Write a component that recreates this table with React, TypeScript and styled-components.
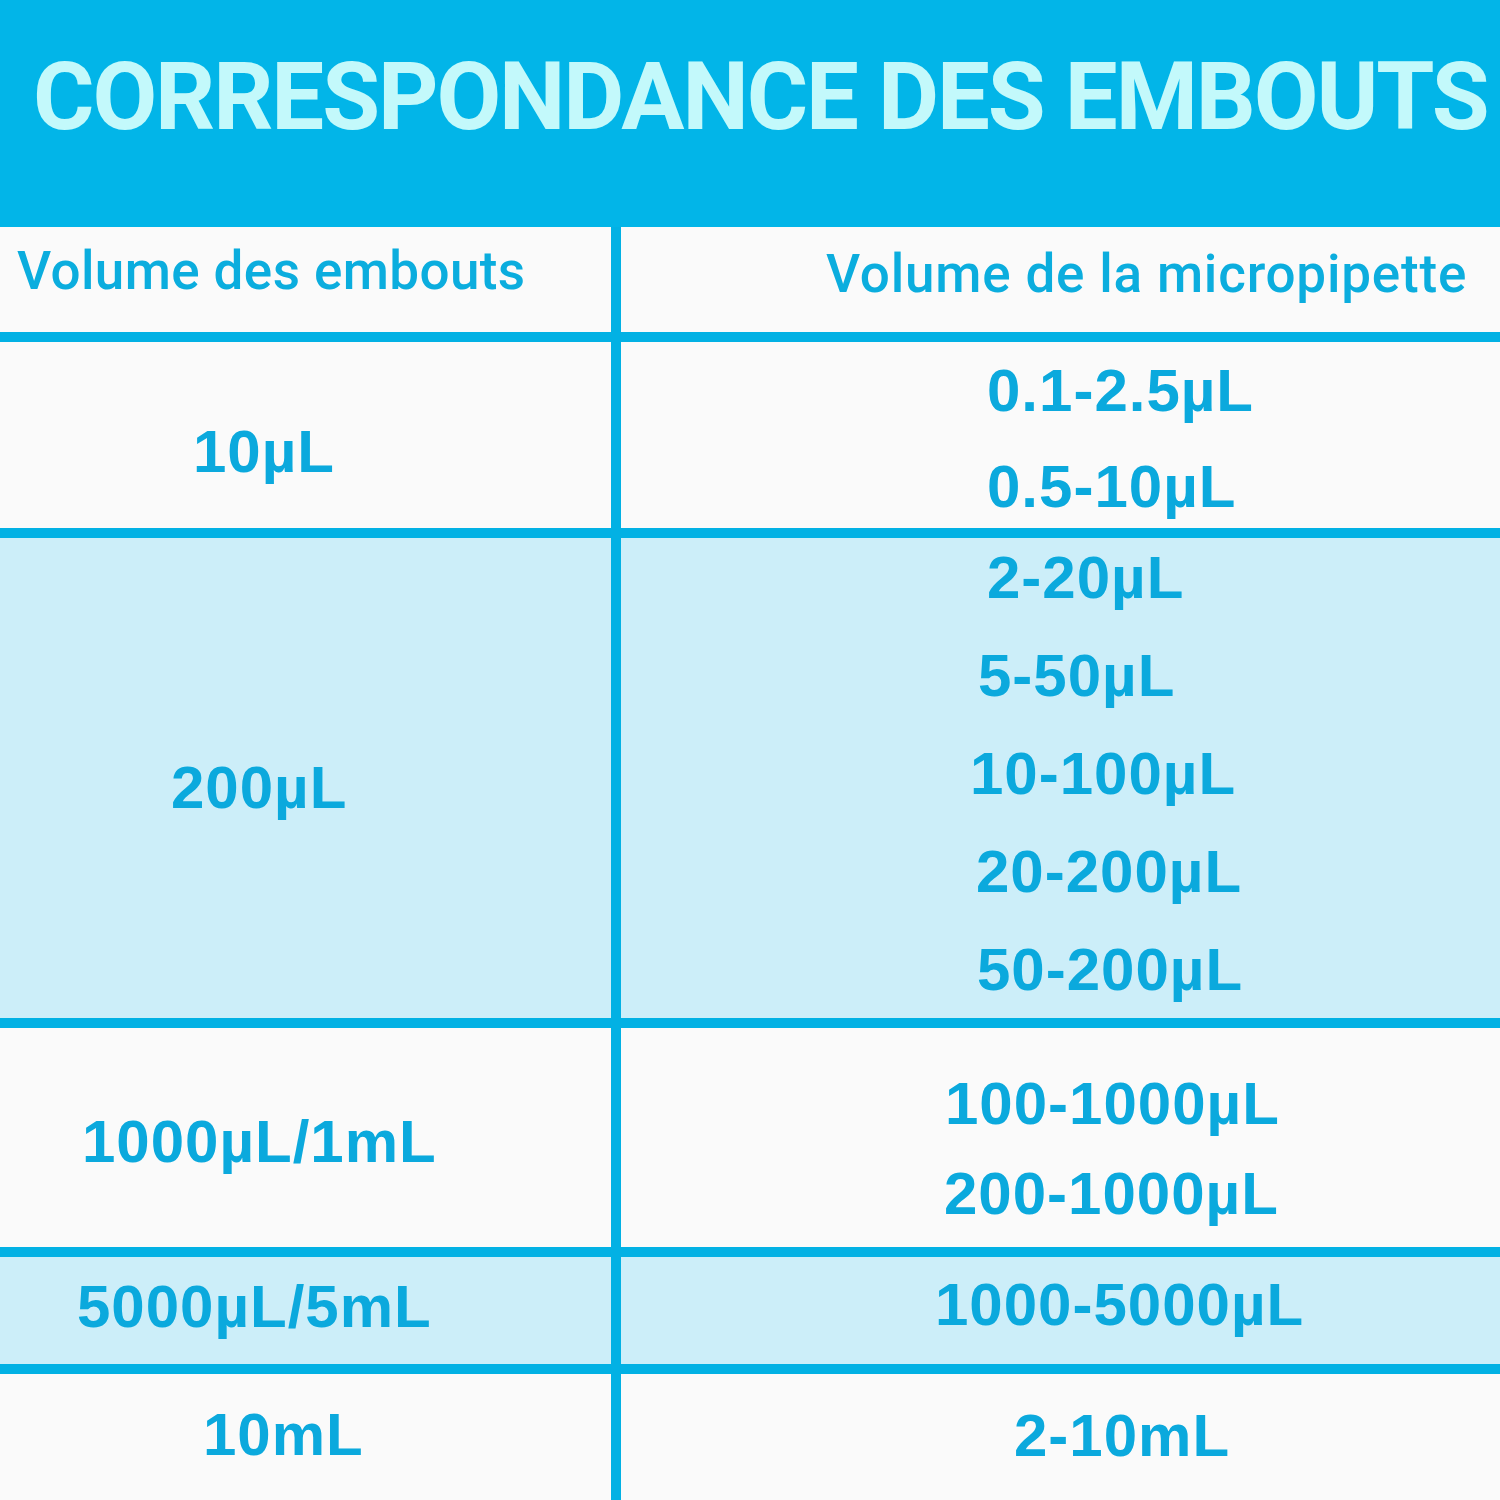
import React from "react";
import styled, { createGlobalStyle } from "styled-components";

const Global = createGlobalStyle`
  html, body { margin: 0; padding: 0; background: #fafafa; }
  body { width: 1500px; height: 1500px; overflow: hidden; }
`;

const Page = styled.div`
  width: 1500px;
  height: 1500px;
  display: flex;
  flex-direction: column;
  background: #fafafa;
  overflow: hidden;
`;

const Banner = styled.header`
  height: 227px;
  flex: none;
  box-sizing: border-box;
  background: #02b5e8;
  padding: 50px 0 0 33px;
`;

const Title = styled.h1`
  margin: 0;
  font-family: Roboto, "Noto Sans", sans-serif;
  font-weight: 700;
  font-size: 94px;
  line-height: 1;
  color: #c3f9fb;
  white-space: nowrap;
  letter-spacing: -2.1px;
`;

const Table = styled.div`
  flex: 1;
  display: grid;
  grid-template-columns: 611px 879px;
  grid-template-rows: 105px 186px 480px 219px 107px 126px;
  gap: 10px;
  background: #02b1e4;
`;

const Cell = styled.div<{ $tint?: boolean; $pad: number; $gap?: number }>`
  display: flex;
  flex-direction: column;
  gap: ${(p) => p.$gap ?? 0}px;
  box-sizing: border-box;
  padding-top: ${(p) => p.$pad}px;
  background: ${(p) => (p.$tint ? "#cceef9" : "#fafafa")};
  overflow: hidden;
`;

const HeadText = styled.div<{ $indent: number; $spacing: number }>`
  padding-left: ${(p) => p.$indent}px;
  font-family: Roboto, "Noto Sans", sans-serif;
  font-weight: 500;
  font-size: 53px;
  line-height: 1;
  letter-spacing: ${(p) => p.$spacing}px;
  color: #0badde;
  white-space: nowrap;
`;

const Value = styled.div<{ $indent: number }>`
  padding-left: ${(p) => p.$indent}px;
  font-family: "Liberation Sans", Arial, sans-serif;
  font-weight: 700;
  font-size: 60px;
  line-height: 60px;
  letter-spacing: 1px;
  color: #0ba9dd;
  white-space: nowrap;
`;

type Item = [string, number];
type Row = {
  tint: boolean;
  left: { text: string; x: number; pad: number };
  right: { pad: number; gap: number; items: Item[] };
};

const rows: Row[] = [
  {
    tint: false,
    left: { text: "10µL", x: 193, pad: 80 },
    right: { pad: 19, gap: 36, items: [["0.1-2.5µL", 366], ["0.5-10µL", 366]] },
  },
  {
    tint: true,
    left: { text: "200µL", x: 171, pad: 220 },
    right: {
      pad: 10,
      gap: 38,
      items: [
        ["2-20µL", 366],
        ["5-50µL", 357],
        ["10-100µL", 349],
        ["20-200µL", 355],
        ["50-200µL", 356],
      ],
    },
  },
  {
    tint: false,
    left: { text: "1000µL/1mL", x: 82, pad: 84 },
    right: { pad: 46, gap: 30, items: [["100-1000µL", 324], ["200-1000µL", 323]] },
  },
  {
    tint: true,
    left: { text: "5000µL/5mL", x: 77, pad: 20 },
    right: { pad: 18, gap: 0, items: [["1000-5000µL", 314]] },
  },
  {
    tint: false,
    left: { text: "10mL", x: 203, pad: 31 },
    right: { pad: 32, gap: 0, items: [["2-10mL", 393]] },
  },
];

export default function App() {
  return (
    <Page>
      <Global />
      <Banner>
        <Title>CORRESPONDANCE DES EMBOUTS</Title>
      </Banner>
      <Table>
        <Cell $pad={18}>
          <HeadText $indent={17} $spacing={0.4}>
            Volume des embouts
          </HeadText>
        </Cell>
        <Cell $pad={21}>
          <HeadText $indent={205} $spacing={0.8}>
            Volume de la micropipette
          </HeadText>
        </Cell>
        {rows.map((r, i) => (
          <React.Fragment key={i}>
            <Cell $tint={r.tint} $pad={r.left.pad}>
              <Value $indent={r.left.x}>{r.left.text}</Value>
            </Cell>
            <Cell $tint={r.tint} $pad={r.right.pad} $gap={r.right.gap}>
              {r.right.items.map(([t, x]) => (
                <Value key={t} $indent={x}>
                  {t}
                </Value>
              ))}
            </Cell>
          </React.Fragment>
        ))}
      </Table>
    </Page>
  );
}
